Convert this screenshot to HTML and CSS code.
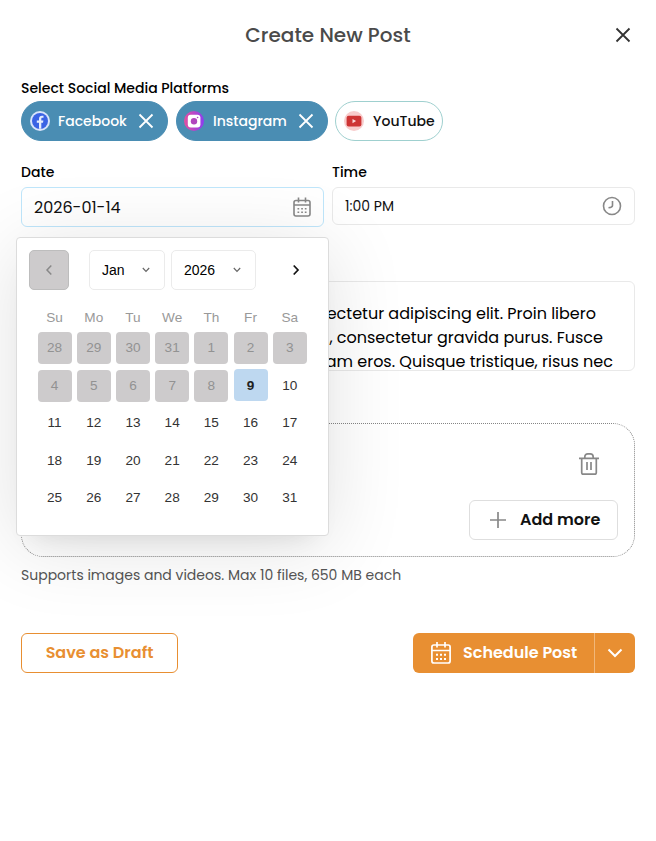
FILE: index.html
```html
<!DOCTYPE html>
<html lang="en">
<head>
	<meta charset="UTF-8">
	<title>Create New Post</title>
	<link rel="stylesheet" href="styles.css">
</head>
<body>
	<div class="modal">
		<div class="header">
			<h1>Create New Post</h1>
			<svg class="close" width="16" height="16" viewBox="0 0 16 16"><path d="M1.500 1.500l13 13M14.500 1.500l-13 13"/></svg>
		</div>

		<div class="label platforms-label">Select Social Media Platforms</div>
		<div class="chips">
			<div class="chip selected facebook">
				<svg width="20" height="20" viewBox="0 0 20 20"><circle cx="10" cy="10" r="10" fill="#d9e4fb"/><circle cx="10" cy="10" r="8" fill="#3b63e4"/><path d="M9 17.800v-6H6.800V9.500H9V7.900c0-2 1.200-3.100 3-3.100h1.500v2h-1.100c-.8 0-1.100.4-1.100 1.100v1.600h2.100l-.4 2.300h-1.700v6z" fill="#e6edfc"/></svg>
				<span>Facebook</span>
				<svg class="remove" width="16" height="16" viewBox="0 0 16 16"><path d="M1.500 1.500l13 13M14.500 1.500l-13 13"/></svg>
			</div>
			<div class="chip selected instagram">
				<svg width="20" height="20" viewBox="0 0 20 20"><defs><linearGradient id="ig"><stop offset="0" stop-color="#e350a0"/><stop offset="1" stop-color="#8b3df0"/></linearGradient></defs><circle cx="10" cy="10" r="10" fill="url(#ig)"/><rect x="3.800" y="3.800" width="12.600" height="12.600" rx="3" fill="#fff"/><circle cx="10" cy="10.200" r="3.200" fill="#b146bd"/><circle cx="13.600" cy="6.500" r=".8" fill="#b146bd"/></svg>
				<span>Instagram</span>
				<svg class="remove" width="16" height="16" viewBox="0 0 16 16"><path d="M1.500 1.500l13 13M14.500 1.500l-13 13"/></svg>
			</div>
			<div class="chip youtube">
				<svg width="20" height="20" viewBox="0 0 20 20"><circle cx="10" cy="10" r="10" fill="#f8cccc"/><rect x="2.600" y="4.800" width="14.800" height="10.600" rx="2" fill="#ce3434"/><path d="M8.500 8v4.200l3.600-2.100z" fill="#fbdada"/></svg>
				<span>YouTube</span>
			</div>
		</div>

		<div class="row">
			<div class="field">
				<div class="label">Date</div>
				<div class="input date">
					<span>2026-01-14</span>
					<svg width="18" height="20" viewBox="0 0 18 20" fill="none" stroke="#888" stroke-width="1.600"><rect x="1" y="3.500" width="16" height="15.500" rx="2"/><path d="M1 8h16M5.500 .5v5M12.500 .5v5"/><path d="M4.500 11.700h1.700M8.200 11.700h1.700M11.800 11.700h1.700M4.500 15.200h1.700M8.200 15.200h1.700M11.800 15.200h1.700"/></svg>
				</div>
				<div class="calendar">
					<div class="nav">
						<div class="prev"><svg width="8" height="12" viewBox="0 0 8 12"><path d="M6.300 1.500L2 6l4.300 4.500"/></svg></div>
						<div class="select month">Jan<svg width="8" height="6" viewBox="0 0 8 6"><path d="M.8 1L4 4.300 7.200 1"/></svg></div>
						<div class="select year">2026<svg width="8" height="6" viewBox="0 0 8 6"><path d="M.8 1L4 4.300 7.200 1"/></svg></div>
						<div class="next"><svg width="8" height="12" viewBox="0 0 8 12"><path d="M1.700 1.500L6 6l-4.300 4.500"/></svg></div>
					</div>
					<div class="weekdays">
						<span>Su</span><span>Mo</span><span>Tu</span><span>We</span><span>Th</span><span>Fr</span><span>Sa</span>
					</div>
					<div class="days">
						<span class="off">28</span><span class="off">29</span><span class="off">30</span><span class="off">31</span><span class="off">1</span><span class="off">2</span><span class="off">3</span>
						<span class="off">4</span><span class="off">5</span><span class="off">6</span><span class="off">7</span><span class="off">8</span><span class="today">9</span><span>10</span>
						<span>11</span><span>12</span><span>13</span><span>14</span><span>15</span><span>16</span><span>17</span>
						<span>18</span><span>19</span><span>20</span><span>21</span><span>22</span><span>23</span><span>24</span>
						<span>25</span><span>26</span><span>27</span><span>28</span><span>29</span><span>30</span><span>31</span>
					</div>
				</div>
			</div>
			<div class="field">
				<div class="label">Time</div>
				<div class="input time">
					<span>1:00 PM</span>
					<svg width="20" height="20" viewBox="0 0 20 20" fill="none" stroke="#888" stroke-width="1.600"><circle cx="10" cy="10" r="8.500"/><path d="M10.500 5v4.500c0 1.500-1.500 2-4 2.300"/></svg>
				</div>
			</div>
		</div>

		<div class="caption">
			<p class="line1">ectetur adipiscing elit. Proin libero</p>
			<p class="line2">, consectetur gravida purus. Fusce</p>
			<p class="line3">am eros. Quisque tristique, risus nec</p>
		</div>

		<div class="upload">
			<svg class="trash" width="20" height="24" viewBox="0 0 20 24" fill="none" stroke="#888" stroke-width="1.700"><path d="M0 6.300h20M2.700 6.300V20.500c0 1.100.6 1.700 1.700 1.700h11.200c1.100 0 1.700-.6 1.700-1.700V6.300M5.800 6V5c0-2 1.300-3.200 3-3.200h2.400c1.700 0 3 1.200 3 3.200v1M8 10v8M12 10v8"/></svg>
			<div class="add">
				<svg width="16" height="16" viewBox="0 0 16 16" stroke="#888" stroke-width="1.700"><path d="M0 8h16M8 0v16"/></svg>
				<span>Add more</span>
			</div>
		</div>
		<p class="hint">Supports images and videos. Max 10 files, 650 MB each</p>

		<div class="footer">
			<div class="draft">Save as Draft</div>
			<div class="schedule">
				<div class="main">
					<svg width="20" height="22" viewBox="0 0 20 22" fill="none" stroke="#fff" stroke-width="1.700"><rect x=".9" y="3" width="18.200" height="18" rx="2"/><path d="M.8 8.500h18.400M6 0v5.500M14 0v5.500"/><path d="M5 12.700h2M9 12.700h2M13 12.700h2M5 17h2M9 17h2M13 17h2" stroke-width="2"/></svg>
					<span>Schedule Post</span>
				</div>
				<div class="more"><svg width="16" height="10" viewBox="0 0 16 10" fill="none" stroke="#fff" stroke-width="2"><path d="M1.500 1.500L8 8l6.500-6.500"/></svg></div>
			</div>
		</div>
	</div>
</body>
</html>
```
FILE: styles.css
```css
*{
	margin: 0;
	padding: 0;
	box-sizing: border-box;
}
body{
	background-color: #fff;
	font-family: Poppins, Inter, sans-serif;
	color: #111;
}
svg{
	flex: none;
	display: block;
}
span{
	white-space: nowrap;
}
.modal{
	width: 656px;
	height: 841px;
	padding: 0 21px;
	overflow: hidden;
}
.header{
	height: 70px;
	display: grid;
	grid-template-columns: 40px 1fr 40px;
	align-items: center;
}
.header h1{
	grid-column: 2;
	text-align: center;
	font-size: 20px;
	font-weight: 500;
	color: #4a4a4a;
}
.close,
.remove{
	fill: none;
	stroke: #333;
	stroke-width: 1.8;
}
.close{
	margin-left: 20px;
}
.label{
	height: 22px;
	line-height: 22px;
	font-size: 14px;
	font-weight: 500;
	color: #000;
}
.platforms-label{
	margin-top: 7px;
}
.chips{
	display: flex;
	gap: 8px;
	margin-top: 2px;
}
.chip{
	height: 40px;
	border-radius: 20px;
	border: 1px solid #9fd0cf;
	padding-left: 8px;
	display: flex;
	align-items: center;
	font-size: 14px;
	font-weight: 500;
}
.chip span{
	margin-left: 9px;
}
.selected{
	background-color: #4a8db3;
	border-color: #4a8db3;
	color: #fff;
}
.remove{
	stroke: #fff;
	margin-left: auto;
	margin-right: 13px;
}
.facebook{
	width: 147px;
}
.facebook span{
	margin-left: 8px;
}
.instagram{
	width: 152px;
	padding-left: 7px;
}
.youtube{
	width: 108px;
	margin-left: -1px;
}
.row{
	display: flex;
	gap: 8px;
	margin-top: 20px;
	height: 66px;
}
.field{
	width: 303px;
	position: relative;
}
.input{
	margin-top: 4px;
	border: 1px solid #e9e9e9;
	border-radius: 6px;
	display: flex;
	align-items: center;
	justify-content: space-between;
	padding: 0 12px;
}
.date{
	height: 40px;
	border-color: #bfe6fb;
	font-size: 16px;
}
.time{
	height: 38px;
	font-size: 14px;
}
.calendar{
	position: absolute;
	z-index: 2;
	left: -5px;
	top: 76px;
	width: 313px;
	height: 299px;
	padding: 12px;
	background-color: #fff;
	border: 1px solid #dcdcdc;
	border-radius: 4px;
	box-shadow: 0 10px 80px rgba(0,0,0,.12), 0 16px 24px -16px rgba(0,0,0,.1);
	font-family: "Liberation Sans", Arial, sans-serif;
}
.nav{
	display: flex;
	height: 40px;
}
.nav svg{
	fill: none;
	stroke: #666;
	stroke-width: 1.2;
}
.prev,
.next{
	width: 40px;
	display: flex;
	align-items: center;
	justify-content: center;
	border-radius: 5px;
}
.prev{
	background-color: #cdcbcc;
	border: 1px solid #bdbdbd;
	margin-right: 20px;
}
.nav .prev svg{
	stroke: #888;
	stroke-width: 1.5;
}
.nav .next svg{
	stroke: #111;
	stroke-width: 1.7;
}
.next{
	margin-left: 20px;
}
.select{
	border: 1px solid #ebebeb;
	border-radius: 5px;
	display: flex;
	align-items: center;
	justify-content: space-between;
	font-size: 14px;
	color: #000;
	padding: 0 14px 0 12px;
}
.month{
	width: 76px;
	margin-right: 6px;
}
.year{
	width: 85px;
}
.weekdays,
.days{
	display: grid;
	grid-template-columns: repeat(7, 39.2px);
	justify-items: center;
	margin-left: 6px;
	font-size: 13.6px;
}
.weekdays{
	margin-top: 17px;
	height: 22px;
	line-height: 22px;
	color: #999;
}
.days{
	margin-top: 3px;
	grid-auto-rows: 37.5px;
	color: #333;
}
.days span{
	width: 34px;
	height: 32px;
	line-height: 32px;
	border-radius: 4px;
	text-align: center;
}
.days .off{
	background-color: #cdcbcc;
	color: #929292;
}
.days .today{
	background-color: #bed8f0;
	color: #222;
	font-weight: bold;
	margin-top: -1px;
	line-height: 34px;
}
.caption{
	margin-top: 54px;
	height: 90px;
	border: 1px solid #e9e9e9;
	border-radius: 6px;
	padding-top: 20px;
	overflow: hidden;
	text-align: right;
	font-size: 16px;
	line-height: 24px;
	white-space: nowrap;
	color: #000;
}
.line1{
	padding-right: 38px;
}
.line2{
	padding-right: 31px;
}
.line3{
	padding-right: 21px;
}
.upload{
	margin-top: 52px;
	height: 134px;
	border: 1px dotted #858585;
	border-radius: 22px;
	padding: 28px 16px 0 0;
	display: flex;
	flex-direction: column;
	align-items: flex-end;
}
.trash{
	margin-right: 19px;
}
.add{
	margin-top: 24px;
	width: 149px;
	height: 40px;
	border: 1px solid #dedede;
	border-radius: 6px;
	display: flex;
	align-items: center;
	padding: 0 0 1px 20px;
	font-size: 16px;
	font-weight: 600;
}
.add span{
	margin-left: 14px;
}
.hint{
	margin-top: 7px;
	height: 22px;
	line-height: 22px;
	font-size: 14px;
	color: #555;
}
.footer{
	margin-top: 47px;
	display: flex;
	justify-content: space-between;
	height: 40px;
	font-size: 16px;
	font-weight: 600;
}
.draft{
	width: 157px;
	padding-bottom: 2px;
	border: 1px solid #e88f32;
	border-radius: 6px;
	display: flex;
	align-items: center;
	justify-content: center;
	color: #e88f32;
}
.schedule{
	width: 222px;
	display: flex;
	background-color: #e88f32;
	border-radius: 6px;
	color: #fff;
}
.main{
	width: 182px;
	border-right: 1px solid #f1b779;
	display: flex;
	align-items: center;
	padding-left: 18px;
}
.main span{
	margin: 0 0 2px 12px;
}
.more{
	flex: 1;
	display: flex;
	align-items: center;
	justify-content: center;
}
```
